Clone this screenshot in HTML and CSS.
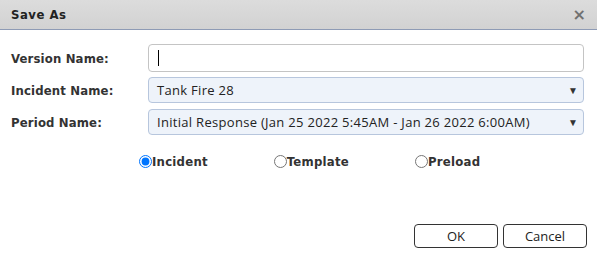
FILE: index.html
```html
<!DOCTYPE html>
<html>
<head>
<meta charset="utf-8">
<link rel="stylesheet" href="styles.css">
</head>
<body>
<div class="dialog">
  <div class="header">
    <span class="title">Save As</span>
    <span class="close">&#xD7;</span>
  </div>
  <div class="form">
    <div class="row">
      <label class="label">Version Name:</label>
      <div class="field text"><span class="caret"></span></div>
    </div>
    <div class="row">
      <label class="label">Incident Name:</label>
      <div class="field select"><span class="val">Tank Fire 28</span><span class="arrow">&#9660;</span></div>
    </div>
    <div class="row">
      <label class="label">Period Name:</label>
      <div class="field select"><span class="val">Initial Response (Jan 25 2022 5:45AM - Jan 26 2022 6:00AM)</span><span class="arrow">&#9660;</span></div>
    </div>
  </div>
  <div class="radios">
    <label class="opt"><input type="radio" name="t" checked>Incident</label>
    <label class="opt"><input type="radio" name="t">Template</label>
    <label class="opt"><input type="radio" name="t">Preload</label>
  </div>
  <div class="buttons">
    <button class="btn">OK</button>
    <button class="btn">Cancel</button>
  </div>
</div>
</body>
</html>
```
FILE: styles.css
```css
html, body {
  margin: 0;
  padding: 0;
  background: #fff;
}
.dialog {
  width: 597px;
  height: 258px;
  display: flex;
  flex-direction: column;
  font-family: "DejaVu Sans Condensed", "DejaVu Sans", sans-serif;
}
.header {
  height: 29px;
  border-bottom: 1px solid #8e9bb5;
  background: linear-gradient(#dcdcdc, #d2d2d2);
  display: flex;
  align-items: center;
  justify-content: space-between;
  padding: 0 11px 0 11px;
}
.title {
  font-weight: bold;
  font-size: 13px;
  letter-spacing: 0.5px;
  color: #222;
}
.close {
  font-family: "DejaVu Sans", sans-serif;
  font-size: 16px;
  font-weight: bold;
  line-height: 16px;
  color: #707070;
}
.form {
  margin-top: 14px;
  padding: 0 13px 0 11px;
  display: flex;
  flex-direction: column;
  gap: 5px;
}
.row {
  display: flex;
  align-items: center;
}
.label {
  width: 137px;
  font-weight: bold;
  font-size: 13px;
  letter-spacing: 0.15px;
  color: #333;
}
.field {
  flex: 1;
  box-sizing: border-box;
  border-radius: 4px;
  display: flex;
  align-items: center;
  font-family: "Open Sans", sans-serif;
  font-size: 13px;
  color: #222;
}
.text {
  height: 28px;
  border: 1px solid #c4c4c4;
  padding-left: 9px;
}
.caret {
  width: 1px;
  height: 16px;
  background: #000;
}
.select {
  height: 26px;
  margin-bottom: 1px;
  border: 1px solid #b7c6dd;
  background: #eef3fa;
  padding: 0 5px 0 8px;
  justify-content: space-between;
}
.val {
  letter-spacing: 0.3px;
}
.arrow {
  font-size: 10px;
  color: #333;
}
.radios {
  margin-top: 18px;
  padding-left: 139px;
  display: flex;
  gap: 66px;
}
.opt {
  display: flex;
  align-items: center;
  font-weight: bold;
  font-size: 13px;
  letter-spacing: 0.25px;
  color: #333;
}
.opt input {
  margin: 0;
  width: 13px;
  height: 13px;
}
.buttons {
  margin-top: auto;
  margin-bottom: 10px;
  padding-right: 10px;
  display: flex;
  justify-content: flex-end;
  gap: 5px;
}
.btn {
  width: 84px;
  height: 24px;
  border: 1px solid #333;
  border-radius: 4px;
  background: #fff;
  font-family: "Open Sans", sans-serif;
  font-size: 13px;
  color: #222;
  padding: 0;
}
```
